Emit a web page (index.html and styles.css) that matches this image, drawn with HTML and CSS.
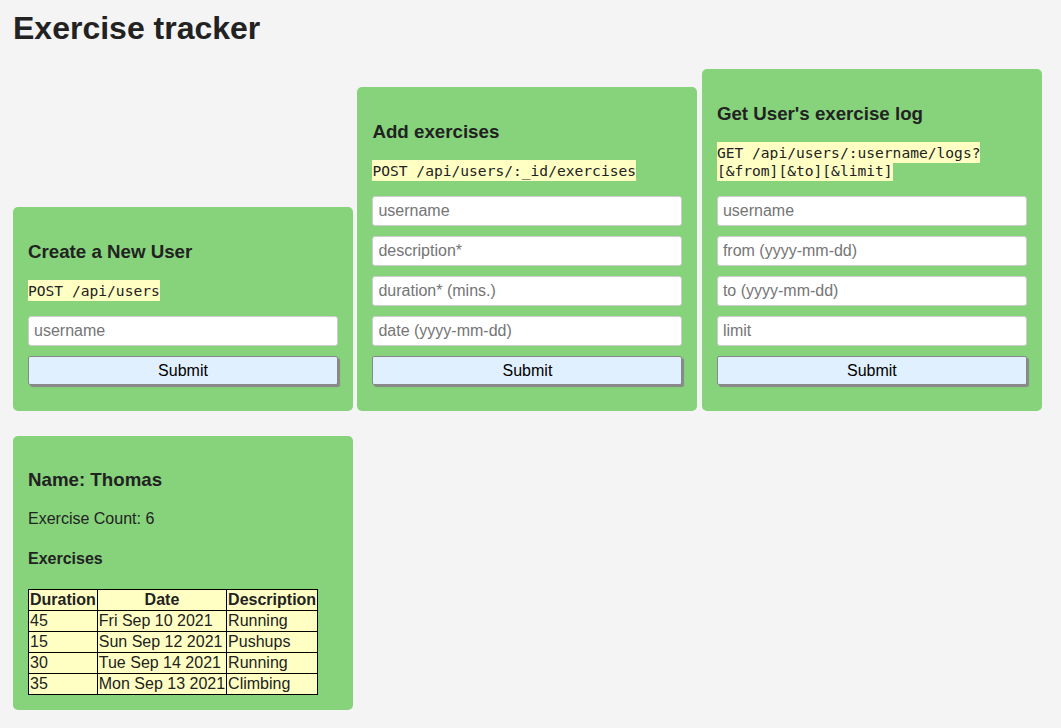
FILE: index.html
```html
<!DOCTYPE html>
<html lang="en">
<head>
<meta charset="utf-8">
<title>Exercise tracker</title>
<link rel="stylesheet" href="styles.css">
</head>
<body>
<h1 class="page-title">Exercise tracker</h1>
<div class="cards">
  <section class="card">
    <h3 class="card-title">Create a New User</h3>
    <p class="endpoint"><span class="endpoint-code">POST /api/users</span></p>
    <form class="form">
      <input class="field" type="text" placeholder="username">
      <button class="submit" type="button">Submit</button>
    </form>
  </section>
  <section class="card">
    <h3 class="card-title">Add exercises</h3>
    <p class="endpoint"><span class="endpoint-code">POST /api/users/:_id/exercises</span></p>
    <form class="form">
      <input class="field" type="text" placeholder="username">
      <input class="field" type="text" placeholder="description*">
      <input class="field" type="text" placeholder="duration* (mins.)">
      <input class="field" type="text" placeholder="date (yyyy-mm-dd)">
      <button class="submit" type="button">Submit</button>
    </form>
  </section>
  <section class="card">
    <h3 class="card-title">Get User's exercise log</h3>
    <p class="endpoint"><span class="endpoint-code">GET /api/users/:username/logs?[&amp;from][&amp;to][&amp;limit]</span></p>
    <form class="form">
      <input class="field" type="text" placeholder="username">
      <input class="field" type="text" placeholder="from (yyyy-mm-dd)">
      <input class="field" type="text" placeholder="to (yyyy-mm-dd)">
      <input class="field" type="text" placeholder="limit">
      <button class="submit" type="button">Submit</button>
    </form>
  </section>
  <section class="card">
    <h3 class="card-title">Name: Thomas</h3>
    <p class="count">Exercise Count: 6</p>
    <h4 class="sub-title">Exercises</h4>
    <table class="log">
      <thead>
        <tr><th>Duration</th><th>Date</th><th>Description</th></tr>
      </thead>
      <tbody>
        <tr><td>45</td><td>Fri Sep 10 2021</td><td>Running</td></tr>
        <tr><td>15</td><td>Sun Sep 12 2021</td><td>Pushups</td></tr>
        <tr><td>30</td><td>Tue Sep 14 2021</td><td>Running</td></tr>
        <tr><td>35</td><td>Mon Sep 13 2021</td><td>Climbing</td></tr>
      </tbody>
    </table>
  </section>
</div>
</body>
</html>
```

FILE: styles.css
```css
html, body {
  background: #f4f4f4;
}
body {
  margin: 0;
  padding: 0 13px;
  font-family: "Liberation Sans", Arial, sans-serif;
  font-size: 16px;
  color: #222;
}
.page-title {
  font-size: 32px;
  line-height: 37px;
  font-weight: bold;
  margin: 10px 0 22px;
}
.cards {
  display: flex;
  flex-wrap: wrap;
  align-items: flex-end;
  column-gap: 4.45px;
  row-gap: 25.3px;
}
.card {
  width: 310px;
  padding: 15px;
  background: #87d37c;
  border-radius: 5px;
}
.card-title {
  font-size: 18.72px;
  line-height: 21.5px;
  font-weight: bold;
  margin: 18.5px 0 0;
}
.endpoint {
  margin: 19.85px 0 16.45px;
  font-family: "DejaVu Sans Mono", "Liberation Mono", monospace;
  font-size: 14.6px;
  line-height: 18px;
  color: #222;
}
.endpoint-code {
  background: #ffffc3;
  padding: 2.35px 0;
}
.form {
  margin: 0;
  padding-bottom: 10.3px;
}
.field {
  display: block;
  box-sizing: border-box;
  width: 100%;
  height: 30px;
  margin: 0 0 10px;
  padding: 0 5px;
  border: 1px solid #ccc;
  border-radius: 3px;
  background: #fff;
  font-family: "Liberation Sans", Arial, sans-serif;
  font-size: 16px;
  color: #222;
}
.field::placeholder {
  color: #757575;
}
.submit {
  display: block;
  box-sizing: border-box;
  width: 100%;
  height: 29px;
  margin: 0;
  padding: 0;
  background: #e1f0fe;
  border: 1px solid #888;
  border-radius: 2px;
  box-shadow: 2px 2px 1px #888;
  font-family: "Liberation Sans", Arial, sans-serif;
  font-size: 16px;
  color: #000;
}
.count {
  margin: 19px 0 0;
  line-height: 18.4px;
}
.sub-title {
  margin: 22px 0 20.5px;
  font-size: 16px;
  line-height: 18.4px;
  font-weight: bold;
}
.log {
  border-collapse: collapse;
  background: #ffffc3;
  font-size: 16px;
  color: #222;
}
.log th,
.log td {
  border: 1px solid #000;
  padding: 1px;
  line-height: 18px;
}
.log th {
  text-align: center;
  font-weight: bold;
}
.log td {
  text-align: left;
}
```
